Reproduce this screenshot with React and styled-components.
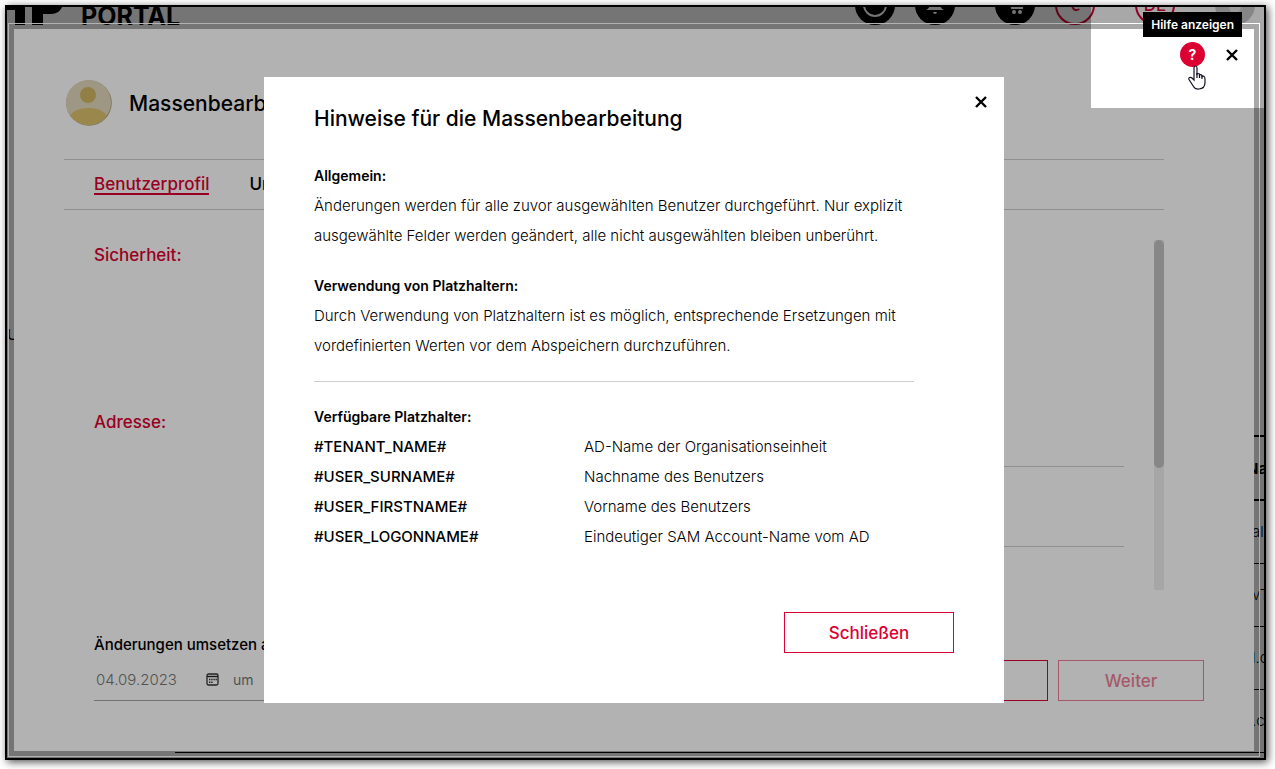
import styled, { createGlobalStyle, css } from "styled-components";

const GlobalStyle = createGlobalStyle`
  *, *::before, *::after {
    box-sizing: border-box;
  }

  body {
    margin: 0;
    background: #fff;
    color: #000;
    font-family: Inter, "Liberation Sans", sans-serif;
    font-size: 15px;
  }

  h1, h2, h3, p {
    margin: 0;
  }

  button, input {
    font-family: inherit;
  }
`;

const RED = "#dc0032";

/* Every layer of the frame shares the same grid cell */
const Frame = styled.div`
  display: grid;
  grid-template-columns: minmax(0, 1fr);
  min-height: calc(100vh - 14px);
  margin: 5px 9px 9px 5px;
  border: 2px solid #000;
  box-shadow: 2px 2px 8px rgba(0, 0, 0, 0.7);
  overflow: hidden;

  > * {
    grid-area: 1 / 1;
    min-width: 0;
  }
`;

const Portal = styled.div`
  height: 0;
`;

const PortalHeader = styled.header`
  display: flex;
  align-items: flex-end;
  height: 50px;
  margin-top: -32px;
  padding-right: 9px;
`;

const Brand = styled.div`
  display: flex;
  align-items: flex-end;
  gap: 18px;
  margin-right: auto;
  font-size: 25px;
  line-height: 18px;
  font-weight: 700;

  svg {
    display: block;
  }
`;

const IconGroup = styled.div`
  display: flex;
  gap: 20px;
  margin-left: 40px;
`;

const Round = styled.button`
  display: grid;
  place-items: center;
  width: 40px;
  height: 40px;
  padding: 0;
  border: ${(p) => (p.$outlined ? `2px solid ${RED}` : "none")};
  border-radius: 50%;
  background: ${(p) => (p.$outlined ? "transparent" : p.$grey ? "#ccc" : "#000")};
  color: ${(p) => (p.$outlined ? RED : "#fff")};
  font-size: 17px;
  font-weight: 500;
`;

const PortalMain = styled.div`
  display: flex;
  align-items: flex-start;
  padding-top: 302px;
`;

const SideNav = styled.div`
  flex: none;
  width: 168px;
  line-height: 16px;
`;

const UserList = styled.div`
  flex: 1;
  min-width: 0;
  margin-top: 108px;
`;

const UserTable = styled.table`
  width: 100%;
  border-collapse: collapse;
  border-top: 2px solid #000;
  table-layout: fixed;

  th,
  td {
    height: 63px;
    padding: 0;
    border-bottom: 1px solid #000;
    white-space: nowrap;
    text-align: left;
  }

  th {
    height: 64px;
    border-bottom-width: 2px;
  }

  th:last-child {
    width: 17px;
  }

  td:last-child {
    padding-left: 5px;
    font-weight: 300;
  }
`;

const Scrim = styled.div`
  background: rgba(0, 0, 0, 0.34);
  z-index: 1;
`;

const Panel = styled.section`
  display: flex;
  flex-direction: column;
  position: relative;
  z-index: 1;
  margin: 22px 10px 7px 7px;
  padding: 50px;
  background: #fff;
  outline: 1px solid #fff;
  outline-offset: 5px;
`;

const PanelActions = styled.div`
  position: absolute;
  top: 13px;
  right: 14px;
  display: flex;
  align-items: center;
  gap: 19px;
`;

const HelpWrap = styled.div`
  position: relative;
`;

const HelpButton = styled.button`
  display: block;
  width: 25px;
  height: 25px;
  padding: 0;
  border: 0;
  border-radius: 50%;
  background: ${RED};
  color: #fff;
  font-size: 14px;
  font-weight: 700;
`;

const Tooltip = styled.span`
  position: absolute;
  right: -37px;
  bottom: 30px;
  padding: 0 8px;
  background: #000;
  color: #fff;
  font-size: 12px;
  line-height: 25px;
  font-weight: 600;
  white-space: nowrap;
`;

const Pointer = styled.svg`
  position: absolute;
  top: 23px;
  left: 8px;
`;

const CloseButton = styled.button`
  display: block;
  width: 16px;
  height: 16px;
  padding: 0;
  border: 0;
  background: transparent;
  color: #000;

  svg {
    display: block;
  }
`;

const PanelHeader = styled.header`
  display: flex;
  align-items: center;
  gap: 17px;
  height: 50px;
`;

const Title = styled.h2`
  font-size: 21px;
  line-height: 24px;
  font-weight: 500;
`;

const Tabs = styled.nav`
  display: flex;
  align-items: center;
  gap: 40px;
  height: 51px;
  margin: 30px 40px 0 0;
  padding: 0 30px;
  border-top: 1px solid #cfcfcf;
  border-bottom: 1px solid #cfcfcf;
`;

const Tab = styled.a`
  border-bottom: 2px solid transparent;
  color: #000;
  font-size: 17px;
  line-height: 18px;
  font-weight: 500;
  text-decoration: none;

  ${(p) =>
    p.$active &&
    css`
      border-color: ${RED};
      color: ${RED};
    `}
`;

const FormArea = styled.div`
  display: flex;
  gap: 30px;
  height: 350px;
  margin: 30px 40px 0 30px;
`;

const FormFields = styled.div`
  flex: 1;
`;

const FormSection = styled.fieldset`
  display: block;
  min-width: 0;
  min-height: 167px;
  margin: 0;
  padding: 0;
  border: 0;
`;

const SectionTitle = styled.legend`
  padding: 0;
  color: ${RED};
  font-size: 17px;
  line-height: 30px;
  font-weight: 500;
`;

const LineInput = styled.input`
  display: block;
  width: 50%;
  height: 30px;
  margin: 0 0 50px auto;
  padding: 0;
  border: 0;
  border-bottom: 1px solid #cfcfcf;
  background: transparent;
`;

const ScrollTrack = styled.div`
  width: 10px;
  background: #eee;
`;

const ScrollThumb = styled.div`
  height: 65%;
  border-radius: 5px;
  background: #c2c2c2;
`;

const PanelFooter = styled.footer`
  display: flex;
  align-items: flex-end;
  justify-content: space-between;
  margin-top: auto;
  padding-left: 30px;
`;

const ScheduleLabel = styled.label`
  display: block;
  line-height: 20px;
  font-weight: 500;
`;

const ScheduleRow = styled.div`
  display: flex;
  align-items: center;
  gap: 14px;
  width: 300px;
  height: 46px;
  padding: 4px 0 0 2px;
  border-bottom: 1px solid #a3a3a3;
  color: #777;
  font-size: 14px;
`;

const DateInput = styled.input`
  width: 96px;
  padding: 0;
  border: 0;
  background: transparent;
  color: #777;
  font-size: 15px;
  font-weight: 300;
`;

const ButtonRow = styled.div`
  display: flex;
  gap: 10px;
`;

const Button = styled.button`
  min-width: ${(p) => (p.$wide ? "170px" : "146px")};
  height: 41px;
  border: 1px solid ${RED};
  background: #fff;
  color: ${RED};
  font-size: 17px;
  font-weight: 500;

  &:disabled {
    opacity: 0.5;
  }
`;

/* Dims everything except the corner with the help button */
const Spotlight = styled.div`
  z-index: 2;
  justify-self: end;
  width: 173px;
  height: 101px;
  box-shadow: 0 0 0 200vmax rgba(0, 0, 0, 0.3);
  pointer-events: none;
`;

const DialogLayer = styled.div`
  z-index: 3;
  display: flex;
  align-items: center;
  justify-content: center;
  margin: 22px 10px 7px 7px;
  pointer-events: none;
`;

const Dialog = styled.div`
  position: relative;
  width: 100%;
  max-width: 740px;
  padding: 30px 50px 50px;
  background: #fff;
  pointer-events: auto;

  > ${CloseButton} {
    position: absolute;
    top: 17px;
    right: 15px;
  }
`;

const DialogBody = styled.div`
  display: flex;
  flex-direction: column;
  gap: 20px;
  margin: 30px 40px 60px 0;
  line-height: 30px;
`;

const Heading = styled.h3`
  font-size: 14px;
  font-weight: 600;
`;

const Text = styled.p`
  font-weight: 300;
`;

const Divider = styled.hr`
  width: 100%;
  height: 1px;
  margin: 0;
  border: 0;
  background: #cfcfcf;
`;

const PlaceholderTable = styled.table`
  width: 100%;
  border-collapse: collapse;
  table-layout: fixed;

  th,
  td {
    height: 30px;
    padding: 0;
    text-align: left;
    font-weight: 300;
  }

  th {
    width: 270px;
    font-weight: 500;
  }
`;

const DialogFooter = styled.footer`
  display: flex;
  justify-content: flex-end;
`;

const placeholders = [
  ["#TENANT_NAME#", "AD-Name der Organisationseinheit"],
  ["#USER_SURNAME#", "Nachname des Benutzers"],
  ["#USER_FIRSTNAME#", "Vorname des Benutzers"],
  ["#USER_LOGONNAME#", "Eindeutiger SAM Account-Name vom AD"],
];

const users = ["al", "vT", "l.c", ".c"];

const CrossIcon = () => (
  <svg width="16" height="16" viewBox="0 0 16 16" aria-hidden="true">
    <path d="M3 3l10 10M13 3L3 13" stroke="currentColor" strokeWidth="2.4" />
  </svg>
);

const Logo = () => (
  <svg width="56" height="38" viewBox="0 0 56 38" aria-hidden="true">
    <path d="M0 0h18v38H8V23H0zM25 0h31v18c-3 8-8 9-14 9h-6v11H25z" fill="#000" />
  </svg>
);

const Avatar = () => (
  <svg width="48" height="48" viewBox="-1 1 48 48" aria-hidden="true">
    <defs>
      <clipPath id="avatarClip">
        <circle cx="23.5" cy="23.5" r="22.5" />
      </clipPath>
    </defs>
    <circle cx="24" cy="24" r="22.8" fill="#b5a67c" />
    <circle cx="23.5" cy="23.5" r="22.5" fill="#e3d9bd" />
    <g clipPath="url(#avatarClip)">
      <circle cx="23" cy="16" r="8" fill="#d1b764" />
      <ellipse cx="23.5" cy="43" rx="21" ry="14" fill="#dcc26c" />
    </g>
  </svg>
);

const CalendarIcon = () => (
  <svg width="13" height="13" viewBox="0 0 13 13" fill="none" aria-hidden="true">
    <rect x="1" y="1" width="11" height="11" rx="1.5" stroke="#333" strokeWidth="1.3" />
    <path d="M1 3.500h11" stroke="#222" strokeWidth="1.4" />
    <path
      d="M5.200 6.500h1.400M7.400 6.500h1.400M9.500 6.500h1.400M3 6.500h1.400M3 9.200h1.400M5.200 9.200h1.400"
      stroke="#333"
      strokeWidth="1.4"
    />
  </svg>
);

const App = () => {
  return (
    <>
      <GlobalStyle />
      <Frame>
        <Portal>
          <PortalHeader>
            <Brand>
              <Logo />
              PORTAL
            </Brand>
            <IconGroup>
              <Round aria-label="Support">
                <svg width="26" height="26" viewBox="0 0 26 26" fill="none">
                  <circle cx="13" cy="13" r="11" stroke="#fff" strokeWidth="2" />
                </svg>
              </Round>
              <Round aria-label="Benachrichtigungen">
                <svg width="20" height="20" viewBox="0 0 20 20" fill="#fff">
                  <path d="M10 1q5 1 5 8 0 4 4 6H1q4-2 4-6 0-7 5-8zM8 17h4q-.5 2-2 2t-2-2z" />
                </svg>
              </Round>
            </IconGroup>
            <IconGroup>
              <Round aria-label="Warenkorb">
                <svg width="20" height="20" viewBox="0 0 20 20" fill="none">
                  <path d="M1 2h3l3 11h11M17 10l2-6H5" stroke="#fff" strokeWidth="2" />
                  <circle cx="9" cy="17" r="2" fill="#fff" />
                  <circle cx="15" cy="17" r="2" fill="#fff" />
                </svg>
              </Round>
              <Round $outlined>€</Round>
            </IconGroup>
            <IconGroup>
              <Round $outlined>DE</Round>
            </IconGroup>
            <IconGroup>
              <Round $grey aria-label="Konto">
                <svg width="40" height="40" viewBox="0 0 40 40" fill="#fff">
                  <circle cx="20" cy="22" r="6" opacity="0.6" />
                </svg>
              </Round>
            </IconGroup>
          </PortalHeader>
          <PortalMain>
            <SideNav>U</SideNav>
            <UserList>
              <UserTable>
                <thead>
                  <tr>
                    <th />
                    <th>Name</th>
                  </tr>
                </thead>
                <tbody>
                  {users.map((user) => (
                    <tr key={user}>
                      <td />
                      <td>{user}</td>
                    </tr>
                  ))}
                </tbody>
              </UserTable>
            </UserList>
          </PortalMain>
        </Portal>
        <Scrim />

        <Panel>
          <PanelHeader>
            <Avatar />
            <Title>Massenbearbeitung</Title>
          </PanelHeader>
          <Tabs>
            <Tab href="#profil" $active>
              Benutzerprofil
            </Tab>
            <Tab href="#unit">Unit</Tab>
          </Tabs>
          <FormArea>
            <FormFields>
              <FormSection>
                <SectionTitle>Sicherheit:</SectionTitle>
              </FormSection>
              <FormSection>
                <SectionTitle>Adresse:</SectionTitle>
                <LineInput aria-label="Straße" />
                <LineInput aria-label="Ort" />
              </FormSection>
            </FormFields>
            <ScrollTrack>
              <ScrollThumb />
            </ScrollTrack>
          </FormArea>
          <PanelFooter>
            <div>
              <ScheduleLabel htmlFor="schedule">Änderungen umsetzen am:</ScheduleLabel>
              <ScheduleRow>
                <DateInput id="schedule" defaultValue="04.09.2023" />
                <CalendarIcon />
                <span>um</span>
              </ScheduleRow>
            </div>
            <ButtonRow>
              <Button>Zurück</Button>
              <Button disabled>Weiter</Button>
            </ButtonRow>
          </PanelFooter>
          <PanelActions>
            <HelpWrap>
              <HelpButton aria-describedby="helpTooltip">?</HelpButton>
              <Tooltip id="helpTooltip" role="tooltip">
                Hilfe anzeigen
              </Tooltip>
              <Pointer width="20" height="26" viewBox="0 0 20 26" aria-hidden="true">
                <path
                  d="M6 15V3q0-2 1.500-2T9 3v6q1-1 2.500 0v1q1.500-1 2.500.5v1q1.700-1 2.500.5.500.7.500 2.500v3q0 6-6 6.500-4 .3-5.500-2.500L1 14.500q-.6-1.500.5-2Q3 12 4.500 13.500z"
                  fill="#fff"
                  stroke="#101020"
                  strokeWidth="1.2"
                />
                <path d="M9 8v5M11.500 9.500V13M14 10.500V14" stroke="#101020" strokeWidth="1.2" />
              </Pointer>
            </HelpWrap>
            <CloseButton aria-label="Fenster schließen">
              <CrossIcon />
            </CloseButton>
          </PanelActions>
        </Panel>

        <Spotlight />

        <DialogLayer>
          <Dialog role="dialog" aria-labelledby="helpTitle">
            <Title id="helpTitle">Hinweise für die Massenbearbeitung</Title>
            <CloseButton aria-label="Hinweise schließen">
              <CrossIcon />
            </CloseButton>
            <DialogBody>
              <div>
                <Heading>Allgemein:</Heading>
                <Text>
                  Änderungen werden für alle zuvor ausgewählten Benutzer durchgeführt. Nur explizit
                  ausgewählte Felder werden geändert, alle nicht ausgewählten bleiben unberührt.
                </Text>
              </div>
              <div>
                <Heading>Verwendung von Platzhaltern:</Heading>
                <Text>
                  Durch Verwendung von Platzhaltern ist es möglich, entsprechende Ersetzungen mit
                  vordefinierten Werten vor dem Abspeichern durchzuführen.
                </Text>
              </div>
              <Divider />
              <div>
                <Heading>Verfügbare Platzhalter:</Heading>
                <PlaceholderTable>
                  <tbody>
                    {placeholders.map(([name, description]) => (
                      <tr key={name}>
                        <th scope="row">{name}</th>
                        <td>{description}</td>
                      </tr>
                    ))}
                  </tbody>
                </PlaceholderTable>
              </div>
            </DialogBody>
            <DialogFooter>
              <Button $wide>Schließen</Button>
            </DialogFooter>
          </Dialog>
        </DialogLayer>
      </Frame>
    </>
  );
};

export default App;
